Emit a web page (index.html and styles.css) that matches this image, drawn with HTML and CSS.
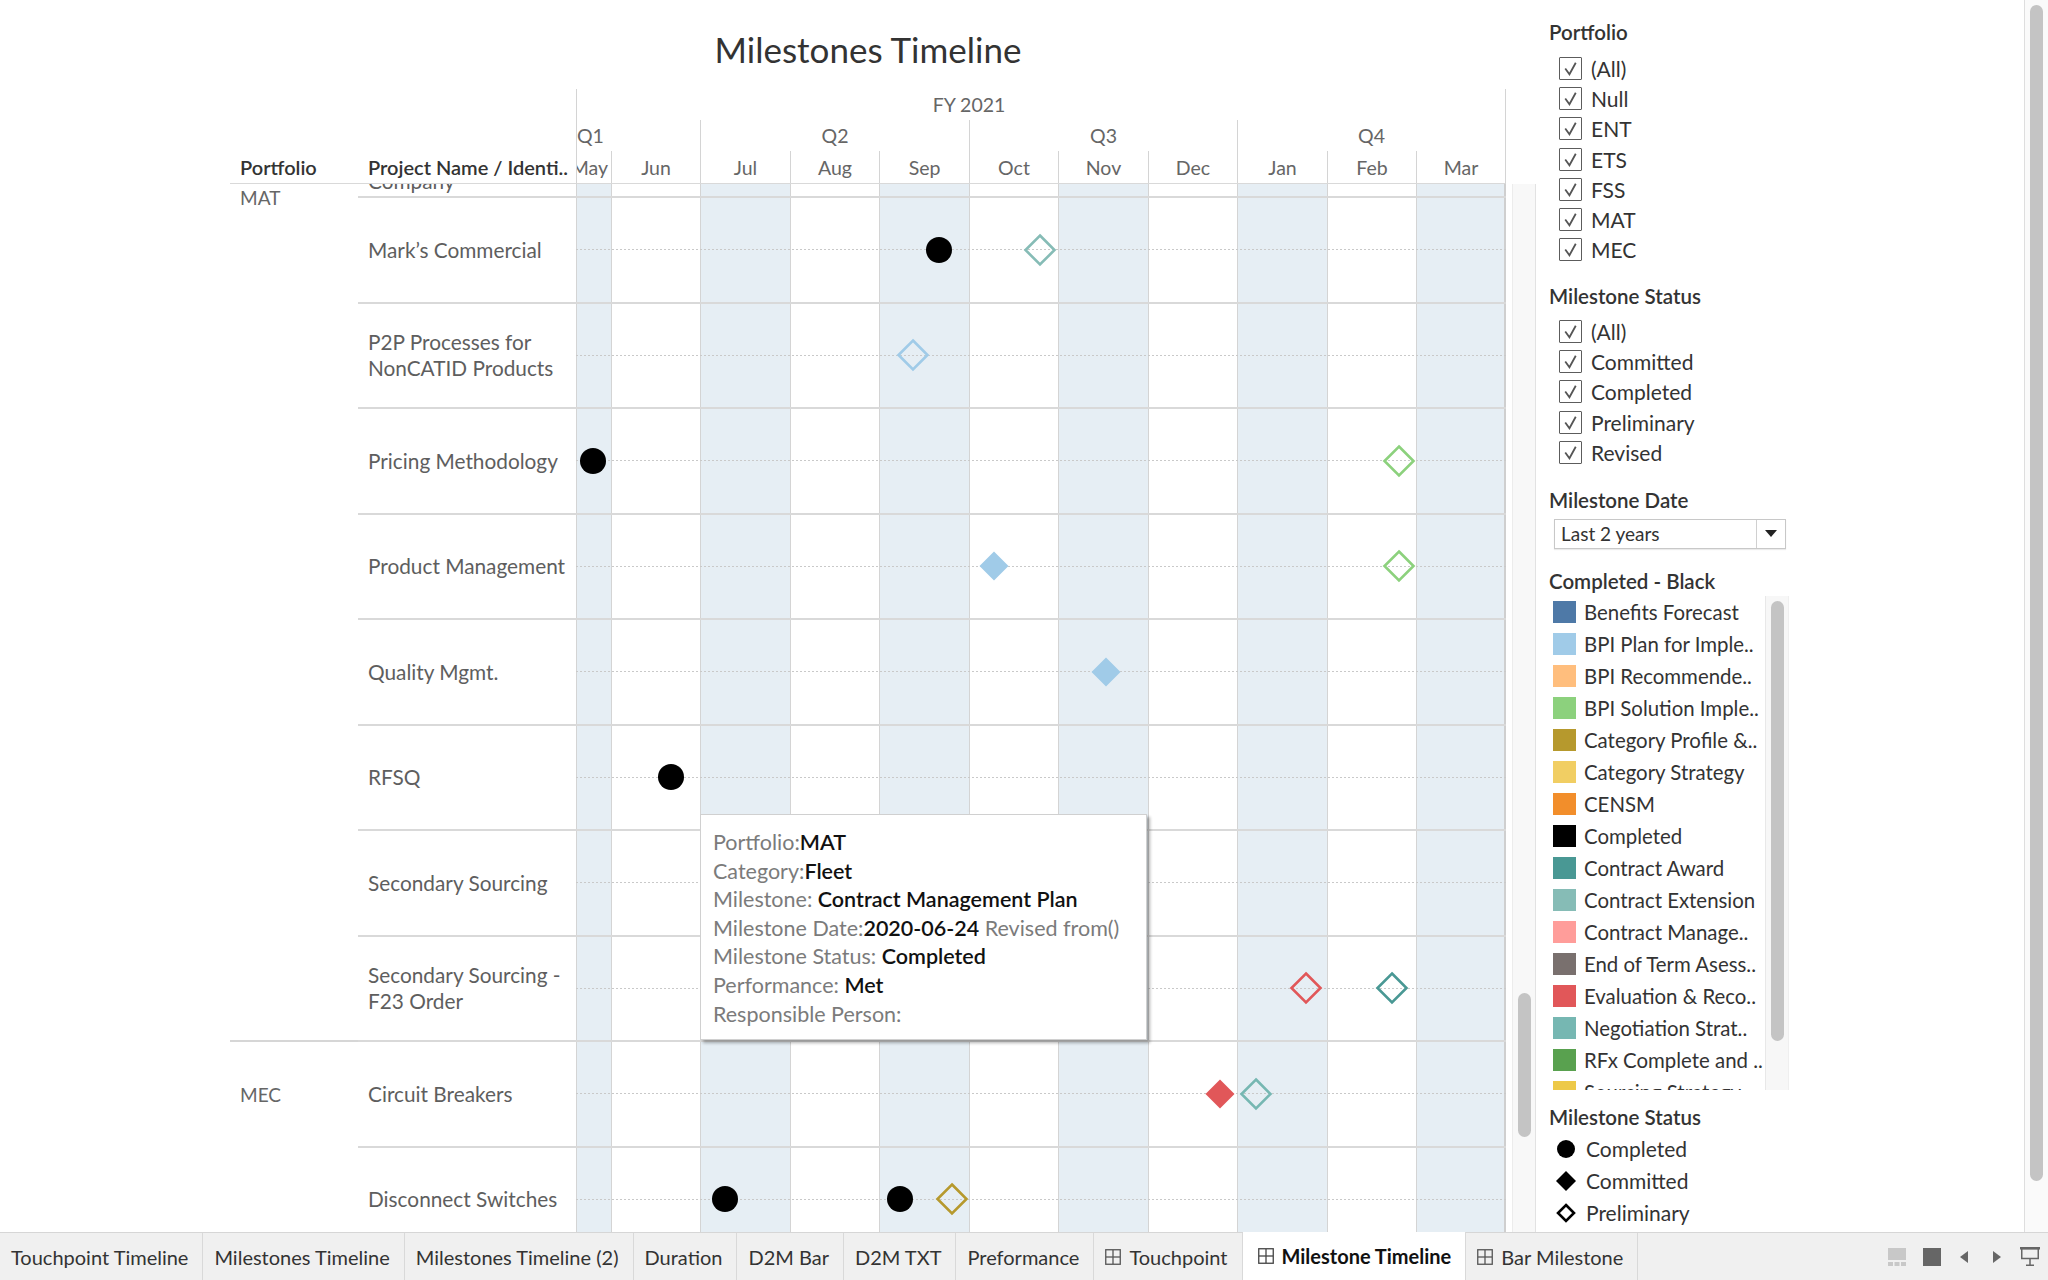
FILE: index.html
```html
<!DOCTYPE html>
<html>
<head>
<meta charset="utf-8">
<title>Milestones Timeline</title>
<link rel="stylesheet" href="styles.css">
</head>
<body>
<div class="app">
  <div class="main">
    <div class="sheet">
      <h1 class="title">Milestones Timeline</h1>
      <div class="header">
        <div class="corner">
          <div class="corner-cell c-port">Portfolio</div>
          <div class="corner-cell c-proj">Project Name / Identi..</div>
        </div>
        <div class="axis">
          <div class="ax-fy"><div class="fy-span">FY 2021</div></div>
          <div class="ax-q">
            <div class="q q1">Q1</div>
            <div class="q">Q2</div>
            <div class="q">Q3</div>
            <div class="q">Q4</div>
          </div>
          <div class="ax-m">
            <div class="m m-may"><span>May</span></div>
            <div class="m">Jun</div>
            <div class="m">Jul</div>
            <div class="m">Aug</div>
            <div class="m">Sep</div>
            <div class="m">Oct</div>
            <div class="m">Nov</div>
            <div class="m">Dec</div>
            <div class="m">Jan</div>
            <div class="m">Feb</div>
            <div class="m">Mar</div>
          </div>
        </div>
      </div>
      <div class="body">
        <div class="pcol">
          <div class="grp grp-mat">MAT</div>
          <div class="grp grp-mec">MEC</div>
        </div>
        <div class="rows">
          <div class="row row-clipped">
            <div class="pname">Company</div>
            <div class="plot"></div>
          </div>
          <div class="row">
            <div class="pname">Mark’s Commercial</div>
            <div class="plot">
              <svg class="mk mk-c" style="left:363px" viewBox="0 0 28 28"><circle cx="14" cy="14" r="13.5" fill="#000"/></svg>
              <svg class="mk mk-o" style="left:464px" viewBox="0 0 32 32"><polygon points="16,1.5 30.5,16 16,30.5 1.5,16" fill="none" stroke="#86bcb6" stroke-width="2.6"/></svg>
            </div>
          </div>
          <div class="row">
            <div class="pname">P2P Processes for NonCATID Products</div>
            <div class="plot">
              <svg class="mk mk-o" style="left:337px" viewBox="0 0 32 32"><polygon points="16,1.5 30.5,16 16,30.5 1.5,16" fill="none" stroke="#a0cbe8" stroke-width="2.6"/></svg>
            </div>
          </div>
          <div class="row">
            <div class="pname">Pricing Methodology</div>
            <div class="plot">
              <svg class="mk mk-c" style="left:17px" viewBox="0 0 28 28"><circle cx="14" cy="14" r="13.5" fill="#000"/></svg>
              <svg class="mk mk-o" style="left:823px" viewBox="0 0 32 32"><polygon points="16,1.5 30.5,16 16,30.5 1.5,16" fill="none" stroke="#8cd17d" stroke-width="2.6"/></svg>
            </div>
          </div>
          <div class="row">
            <div class="pname">Product Management</div>
            <div class="plot">
              <svg class="mk mk-d" style="left:418px" viewBox="0 0 29 29"><polygon points="14.5,0 29,14.5 14.5,29 0,14.5" fill="#a0cbe8"/></svg>
              <svg class="mk mk-o" style="left:823px" viewBox="0 0 32 32"><polygon points="16,1.5 30.5,16 16,30.5 1.5,16" fill="none" stroke="#8cd17d" stroke-width="2.6"/></svg>
            </div>
          </div>
          <div class="row">
            <div class="pname">Quality Mgmt.</div>
            <div class="plot">
              <svg class="mk mk-d" style="left:530px" viewBox="0 0 29 29"><polygon points="14.5,0 29,14.5 14.5,29 0,14.5" fill="#a0cbe8"/></svg>
            </div>
          </div>
          <div class="row">
            <div class="pname">RFSQ</div>
            <div class="plot">
              <svg class="mk mk-c" style="left:95px" viewBox="0 0 28 28"><circle cx="14" cy="14" r="13.5" fill="#000"/></svg>
            </div>
          </div>
          <div class="row">
            <div class="pname">Secondary Sourcing</div>
            <div class="plot"></div>
          </div>
          <div class="row">
            <div class="pname">Secondary Sourcing - F23 Order</div>
            <div class="plot">
              <svg class="mk mk-o" style="left:730px" viewBox="0 0 32 32"><polygon points="16,1.5 30.5,16 16,30.5 1.5,16" fill="none" stroke="#e15759" stroke-width="2.6"/></svg>
              <svg class="mk mk-o" style="left:816px" viewBox="0 0 32 32"><polygon points="16,1.5 30.5,16 16,30.5 1.5,16" fill="none" stroke="#499894" stroke-width="2.6"/></svg>
            </div>
          </div>
          <div class="row">
            <div class="pname">Circuit Breakers</div>
            <div class="plot">
              <svg class="mk mk-d" style="left:644px" viewBox="0 0 29 29"><polygon points="14.5,0 29,14.5 14.5,29 0,14.5" fill="#e15759"/></svg>
              <svg class="mk mk-o" style="left:680px" viewBox="0 0 32 32"><polygon points="16,1.5 30.5,16 16,30.5 1.5,16" fill="none" stroke="#76b7b2" stroke-width="2.6"/></svg>
            </div>
          </div>
          <div class="row">
            <div class="pname">Disconnect Switches</div>
            <div class="plot">
              <svg class="mk mk-c" style="left:149px" viewBox="0 0 28 28"><circle cx="14" cy="14" r="13.5" fill="#000"/></svg>
              <svg class="mk mk-c" style="left:324px" viewBox="0 0 28 28"><circle cx="14" cy="14" r="13.5" fill="#000"/></svg>
              <svg class="mk mk-o" style="left:376px" viewBox="0 0 32 32"><polygon points="16,1.5 30.5,16 16,30.5 1.5,16" fill="none" stroke="#b6992d" stroke-width="2.6"/></svg>
            </div>
          </div>
        </div>
        <div class="vscroll"><div class="vtrack"><div class="vthumb"></div></div></div>
      </div>
    </div>

    <div class="panel">
      <div class="ph">Portfolio</div>
      <ul class="checks checks-a">
        <li><span class="cb"><svg viewBox="0 0 20 20"><path d="M5 10 L9 15.5 L15 4.5" fill="none" stroke="#555" stroke-width="1.7"/></svg></span>(All)</li>
        <li><span class="cb"><svg viewBox="0 0 20 20"><path d="M5 10 L9 15.5 L15 4.5" fill="none" stroke="#555" stroke-width="1.7"/></svg></span>Null</li>
        <li><span class="cb"><svg viewBox="0 0 20 20"><path d="M5 10 L9 15.5 L15 4.5" fill="none" stroke="#555" stroke-width="1.7"/></svg></span>ENT</li>
        <li><span class="cb"><svg viewBox="0 0 20 20"><path d="M5 10 L9 15.5 L15 4.5" fill="none" stroke="#555" stroke-width="1.7"/></svg></span>ETS</li>
        <li><span class="cb"><svg viewBox="0 0 20 20"><path d="M5 10 L9 15.5 L15 4.5" fill="none" stroke="#555" stroke-width="1.7"/></svg></span>FSS</li>
        <li><span class="cb"><svg viewBox="0 0 20 20"><path d="M5 10 L9 15.5 L15 4.5" fill="none" stroke="#555" stroke-width="1.7"/></svg></span>MAT</li>
        <li><span class="cb"><svg viewBox="0 0 20 20"><path d="M5 10 L9 15.5 L15 4.5" fill="none" stroke="#555" stroke-width="1.7"/></svg></span>MEC</li>
      </ul>
      <div class="ph">Milestone Status</div>
      <ul class="checks checks-b">
        <li><span class="cb"><svg viewBox="0 0 20 20"><path d="M5 10 L9 15.5 L15 4.5" fill="none" stroke="#555" stroke-width="1.7"/></svg></span>(All)</li>
        <li><span class="cb"><svg viewBox="0 0 20 20"><path d="M5 10 L9 15.5 L15 4.5" fill="none" stroke="#555" stroke-width="1.7"/></svg></span>Committed</li>
        <li><span class="cb"><svg viewBox="0 0 20 20"><path d="M5 10 L9 15.5 L15 4.5" fill="none" stroke="#555" stroke-width="1.7"/></svg></span>Completed</li>
        <li><span class="cb"><svg viewBox="0 0 20 20"><path d="M5 10 L9 15.5 L15 4.5" fill="none" stroke="#555" stroke-width="1.7"/></svg></span>Preliminary</li>
        <li><span class="cb"><svg viewBox="0 0 20 20"><path d="M5 10 L9 15.5 L15 4.5" fill="none" stroke="#555" stroke-width="1.7"/></svg></span>Revised</li>
      </ul>
      <div class="ph">Milestone Date</div>
      <div class="dd">
        <span class="dd-text">Last 2 years</span>
        <span class="dd-btn"><svg width="12" height="7" viewBox="0 0 12 7"><polygon points="0,0 12,0 6,7" fill="#222"/></svg></span>
      </div>
      <div class="ph ph-legend">Completed - Black</div>
      <div class="legend">
        <ul class="leg-list">
          <li><span class="sw" style="background:#4e79a7"></span>Benefits Forecast</li>
          <li><span class="sw" style="background:#a0cbe8"></span>BPI Plan for Imple..</li>
          <li><span class="sw" style="background:#ffbe7d"></span>BPI Recommende..</li>
          <li><span class="sw" style="background:#8cd17d"></span>BPI Solution Imple..</li>
          <li><span class="sw" style="background:#b6992d"></span>Category Profile &amp;..</li>
          <li><span class="sw" style="background:#f1ce63"></span>Category Strategy</li>
          <li><span class="sw" style="background:#f28e2b"></span>CENSM</li>
          <li><span class="sw" style="background:#000000"></span>Completed</li>
          <li><span class="sw" style="background:#499894"></span>Contract Award</li>
          <li><span class="sw" style="background:#86bcb6"></span>Contract Extension</li>
          <li><span class="sw" style="background:#ff9d9a"></span>Contract Manage..</li>
          <li><span class="sw" style="background:#79706e"></span>End of Term Asess..</li>
          <li><span class="sw" style="background:#e15759"></span>Evaluation &amp; Reco..</li>
          <li><span class="sw" style="background:#76b7b2"></span>Negotiation Strat..</li>
          <li><span class="sw" style="background:#59a14f"></span>RFx Complete and ..</li>
          <li><span class="sw" style="background:#edc948"></span>Sourcing Strategy</li>
        </ul>
        <div class="leg-track"><div class="leg-thumb"></div></div>
      </div>
      <div class="ph ph-shapes">Milestone Status</div>
      <ul class="shapes">
        <li><svg class="shape-ic" viewBox="0 0 20 20"><circle cx="10" cy="10" r="9" fill="#000"/></svg>Completed</li>
        <li><svg class="shape-ic" viewBox="0 0 20 20"><polygon points="10,0 20,10 10,20 0,10" fill="#000"/></svg>Committed</li>
        <li><svg class="shape-ic" viewBox="0 0 20 20"><polygon points="10,2 18,10 10,18 2,10" fill="none" stroke="#000" stroke-width="2.6"/></svg>Preliminary</li>
      </ul>
    </div>

    <div class="pscroll"><div class="pthumb"></div></div>
  </div>

  <div class="tabs">
    <div class="tab">Touchpoint Timeline</div>
    <div class="tab">Milestones Timeline</div>
    <div class="tab">Milestones Timeline (2)</div>
    <div class="tab">Duration</div>
    <div class="tab">D2M Bar</div>
    <div class="tab">D2M TXT</div>
    <div class="tab">Preformance</div>
    <div class="tab"><svg class="tab-ic" viewBox="0 0 16 16"><rect x="0.75" y="0.75" width="14.5" height="14.5" fill="none" stroke="#555" stroke-width="1.3"/><line x1="8" y1="1" x2="8" y2="15" stroke="#555" stroke-width="1.3"/><line x1="1" y1="8" x2="15" y2="8" stroke="#555" stroke-width="1.3"/></svg>Touchpoint</div>
    <div class="tab active"><svg class="tab-ic" viewBox="0 0 16 16"><rect x="0.75" y="0.75" width="14.5" height="14.5" fill="none" stroke="#444" stroke-width="1.3"/><line x1="8" y1="1" x2="8" y2="15" stroke="#444" stroke-width="1.3"/><line x1="1" y1="8" x2="15" y2="8" stroke="#444" stroke-width="1.3"/></svg>Milestone Timeline</div>
    <div class="tab"><svg class="tab-ic" viewBox="0 0 16 16"><rect x="0.75" y="0.75" width="14.5" height="14.5" fill="none" stroke="#555" stroke-width="1.3"/><line x1="8" y1="1" x2="8" y2="15" stroke="#555" stroke-width="1.3"/><line x1="1" y1="8" x2="15" y2="8" stroke="#555" stroke-width="1.3"/></svg>Bar Milestone</div>
    <div class="tools">
      <svg class="tool tool-film" width="18" height="18" viewBox="0 0 18 18"><rect x="0" y="0" width="18" height="12" fill="#c8c8c8"/><rect x="0" y="14" width="5" height="4" fill="#c8c8c8"/><rect x="6.5" y="14" width="5" height="4" fill="#c8c8c8"/><rect x="13" y="14" width="5" height="4" fill="#c8c8c8"/></svg>
      <svg class="tool tool-sq" width="18" height="18" viewBox="0 0 18 18"><rect x="0" y="0" width="18" height="18" fill="#666"/></svg>
      <svg class="tool tool-prev" width="8" height="12" viewBox="0 0 8 12"><polygon points="8,0 0,6 8,12" fill="#666"/></svg>
      <svg class="tool tool-next" width="8" height="12" viewBox="0 0 8 12"><polygon points="0,0 8,6 0,12" fill="#666"/></svg>
      <svg class="tool tool-present" width="20" height="19" viewBox="0 0 20 19"><rect x="0" y="0" width="20" height="2.5" fill="#666"/><rect x="1.75" y="1.5" width="16.5" height="10" fill="none" stroke="#666" stroke-width="1.5"/><line x1="10" y1="12" x2="10" y2="18" stroke="#666" stroke-width="1.5"/><line x1="6" y1="18.25" x2="14" y2="18.25" stroke="#666" stroke-width="1.5"/></svg>
    </div>
  </div>

  <div class="tooltip">
    <div>Portfolio:<b>MAT</b></div>
    <div>Category:<b>Fleet</b></div>
    <div>Milestone: <b>Contract Management Plan</b></div>
    <div>Milestone Date:<b>2020-06-24</b> Revised from()</div>
    <div>Milestone Status: <b>Completed</b></div>
    <div>Performance: <b>Met</b></div>
    <div>Responsible Person:</div>
  </div>
</div>
</body>
</html>
```

FILE: styles.css
```css
* {
  box-sizing: border-box;
  margin: 0;
  padding: 0;
}

html, body {
  width: 2048px;
  height: 1280px;
  overflow: hidden;
  background: #fff;
}

body {
  font-family: Lato, "Open Sans", "Liberation Sans", sans-serif;
  color: #333;
}

.app {
  position: relative;
  width: 2048px;
  height: 1280px;
  display: flex;
  flex-direction: column;
}

.main {
  display: flex;
  height: 1232px;
  flex: none;
}

/* ---------- sheet ---------- */
.sheet {
  width: 1536px;
  flex: none;
  display: flex;
  flex-direction: column;
}

.title {
  height: 89px;
  flex: none;
  padding: 31px 30px 0 230px;
  font-size: 35px;
  line-height: 36px;
  font-weight: 400;
  text-align: center;
  color: #333;
}

.header {
  display: flex;
  height: 95px;
  flex: none;
}

.corner {
  margin-left: 230px;
  width: 346px;
  display: flex;
  align-items: flex-end;
  border-bottom: 1px solid #d9d9d9;
}

.corner-cell {
  height: 32px;
  line-height: 33px;
  font-size: 20px;
  font-weight: 600;
  color: #333;
  white-space: nowrap;
  overflow: hidden;
}

.c-port {
  width: 128px;
  padding-left: 10px;
}

.c-proj {
  width: 218px;
  padding-left: 10px;
}

.axis {
  width: 930px;
  display: flex;
  flex-direction: column;
  border-left: 1px solid #d4d4d4;
  border-right: 1px solid #d4d4d4;
  border-bottom: 1px solid #d9d9d9;
  font-size: 19.5px;
  color: #666;
}

.ax-fy {
  height: 31px;
  overflow: hidden;
}

.fy-span {
  margin-left: -145px;
  width: 1074px;
  text-align: center;
  line-height: 31px;
}

.ax-q {
  height: 31px;
  display: grid;
  grid-template-columns: 123px 269px 268px 268px;
}

.q {
  border-left: 1px solid #d4d4d4;
  text-align: center;
  line-height: 32px;
}

.q1 {
  border-left: none;
  text-align: left;
}

.ax-m {
  height: 32px;
  display: grid;
  grid-template-columns: 34px 89px 90px 89px 90px 89px 90px 89px 90px 89px 89px;
}

.m {
  border-left: 1px solid #d4d4d4;
  text-align: center;
  line-height: 33px;
  white-space: nowrap;
  overflow: hidden;
}

.m-may {
  border-left: none;
  display: flex;
  justify-content: flex-end;
  padding-right: 3px;
}

.m-may span {
  flex: none;
}

/* ---------- body ---------- */
.body {
  display: flex;
  height: 1048px;
  overflow: hidden;
  flex: none;
}

.pcol {
  margin-left: 230px;
  width: 128px;
  flex: none;
}

.grp {
  font-size: 19px;
  line-height: 24px;
  color: #666;
  padding-left: 10px;
}

.grp-mat {
  height: 858px;
  padding-top: 2px;
  border-bottom: 2px solid #d6d6d6;
}

.grp-mec {
  padding-top: 41px;
}

.rows {
  width: 1148px;
  flex: none;
  margin-top: -91.5px;
}

.row {
  display: flex;
  height: 105.5px;
  border-bottom: 2px solid #d9d9d9;
}

.pname {
  width: 218px;
  flex: none;
  display: flex;
  align-items: center;
  padding: 0 4px 0 10px;
  font-size: 20.8px;
  line-height: 26.5px;
  color: #5e5e5e;
}

.row-clipped .pname {
  align-items: flex-end;
  padding-bottom: 2px;
}

.plot {
  position: relative;
  width: 930px;
  flex: none;
  background:
    linear-gradient(to right, #c9c9c9 0 2px, transparent 2px 4px) 0 50% / 4px 1px repeat-x,
    linear-gradient(to right,
      #d4d4d4 0 1px,
      #e6eef4 1px 35px,
      #d4d4d4 35px 36px,
      #fff 36px 124px,
      #d4d4d4 124px 125px,
      #e6eef4 125px 214px,
      #d4d4d4 214px 215px,
      #fff 215px 303px,
      #d4d4d4 303px 304px,
      #e6eef4 304px 393px,
      #d4d4d4 393px 394px,
      #fff 394px 482px,
      #d4d4d4 482px 483px,
      #e6eef4 483px 572px,
      #d4d4d4 572px 573px,
      #fff 573px 661px,
      #d4d4d4 661px 662px,
      #e6eef4 662px 751px,
      #d4d4d4 751px 752px,
      #fff 752px 840px,
      #d4d4d4 840px 841px,
      #e6eef4 841px 928px,
      #cfcfcf 928px 930px);
}

.mk {
  position: absolute;
  top: 50%;
  transform: translate(-50%, -50%);
  overflow: visible;
}

.mk-c {
  width: 27px;
  height: 27px;
}

.mk-d {
  width: 29px;
  height: 29px;
}

.mk-o {
  width: 32px;
  height: 32px;
}

.vscroll {
  width: 30px;
  flex: none;
  padding-left: 6px;
}

.vtrack {
  height: 100%;
  background: #f8f8f8;
  border-left: 1px solid #ececec;
  border-right: 1px solid #e2e2e2;
  padding: 809px 0 0 5px;
}

.vthumb {
  width: 13px;
  height: 144px;
  border-radius: 7px;
  background: #c4c4c4;
}

/* ---------- right panel ---------- */
.panel {
  width: 488px;
  flex: none;
  padding: 18px 0 0 13px;
}

.ph {
  font-size: 20.5px;
  line-height: 28px;
  font-weight: 600;
  color: #333;
  white-space: nowrap;
}

.checks {
  list-style: none;
}

.checks-a {
  margin: 7px 0 17px;
}

.checks-b {
  margin: 6px 0 18px;
}

.checks li {
  height: 30.3px;
  display: flex;
  align-items: center;
  padding-left: 10px;
  font-size: 21px;
  color: #333;
}

.cb {
  width: 23px;
  height: 23px;
  flex: none;
  margin-right: 9px;
  border: 1.5px solid #5c5c5c;
  border-radius: 1px;
  display: flex;
}

.cb svg {
  width: 100%;
  height: 100%;
}

.dd {
  margin: 5px 0 0 5px;
  width: 232px;
  height: 30px;
  display: flex;
  border: 1px solid #c8c8c8;
  box-shadow: 0 1px 1px rgba(0, 0, 0, 0.08);
}

.dd-text {
  flex: 1;
  padding-left: 6px;
  font-size: 19px;
  line-height: 28px;
  color: #333;
}

.dd-btn {
  width: 29px;
  flex: none;
  border-left: 1px solid #d0d0d0;
  display: flex;
  align-items: center;
  justify-content: center;
}

.ph-legend {
  margin-top: 18px;
}

.legend {
  margin-top: 1px;
  width: 240px;
  height: 494px;
  display: flex;
}

.leg-list {
  list-style: none;
  width: 216px;
  flex: none;
  overflow: hidden;
  padding-left: 4px;
}

.leg-list li {
  height: 32px;
  display: flex;
  align-items: center;
  font-size: 20.4px;
  color: #333;
  white-space: nowrap;
}

.sw {
  width: 23px;
  height: 22px;
  flex: none;
  margin-right: 8px;
}

.leg-track {
  width: 24px;
  flex: none;
  background: #f7f7f7;
  border-left: 1px solid #e8e8e8;
  border-right: 1px solid #efefef;
  padding: 5px 0 0 5px;
}

.leg-thumb {
  width: 13px;
  height: 440px;
  border-radius: 7px;
  background: #c4c4c4;
}

.ph-shapes {
  margin-top: 13px;
}

.shapes {
  list-style: none;
  margin-top: 2px;
}

.shapes li {
  height: 32px;
  display: flex;
  align-items: center;
  padding-left: 7px;
  font-size: 21px;
  color: #333;
}

.shape-ic {
  width: 20px;
  height: 20px;
  flex: none;
  margin-right: 10px;
}

.pscroll {
  width: 24px;
  flex: none;
  border-left: 1px solid #dedede;
  background: #fafafa;
  padding: 5px 0 0 5px;
}

.pthumb {
  width: 13px;
  height: 1176px;
  border-radius: 7px;
  background: #c4c4c4;
}

/* ---------- tabs ---------- */
.tabs {
  height: 48px;
  flex: none;
  display: flex;
  background: #f0f0f0;
  border-top: 1px solid #d6d6d6;
}

.tab {
  display: flex;
  align-items: center;
  padding: 0 14px 0 11px;
  border-right: 1px solid #d9d9d9;
  font-size: 20px;
  color: #333;
  white-space: nowrap;
}

.tab.active {
  background: #fff;
  margin-top: -1px;
  font-weight: 700;
  color: #111;
  padding-left: 15px;
}

.tab-ic {
  width: 16px;
  height: 16px;
  flex: none;
  margin-right: 8px;
}

.tools {
  margin-left: auto;
  display: flex;
  align-items: center;
  gap: 19px;
  padding-right: 8px;
}

.tool-sq {
  margin-left: -2px;
}

.tool-next {
  margin-left: 6px;
}

/* ---------- tooltip ---------- */
.tooltip {
  position: absolute;
  left: 700px;
  top: 814px;
  width: 447px;
  height: 226px;
  background: #fff;
  border: 1px solid #d0d0d0;
  box-shadow: 3px 3px 3px rgba(0, 0, 0, 0.3);
  padding: 13px 0 0 12px;
  font-size: 21.5px;
  line-height: 28.6px;
  color: #7b7b7b;
  white-space: nowrap;
}

.tooltip b {
  color: #111;
  font-weight: 600;
}
```
